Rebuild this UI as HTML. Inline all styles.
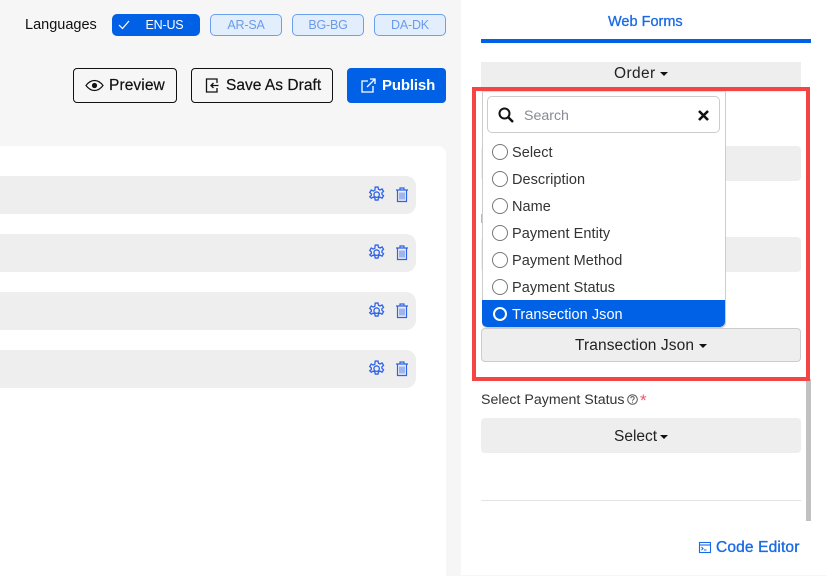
<!DOCTYPE html>
<html><head><meta charset="utf-8"><style>
html,body{margin:0;padding:0}
body{width:827px;height:576px;overflow:hidden;position:relative;background:#f6f6f6;font-family:"Liberation Sans",sans-serif;font-size:14.5px;color:#333}
.a{position:absolute;box-sizing:border-box}
.t{position:absolute;white-space:nowrap;line-height:20px;letter-spacing:.05px}
.pill{position:absolute;top:14px;height:22px;width:72px;border:1px solid #6ba0ee;background:#e3eefc;border-radius:5px;color:#6a9bea;font-size:12.5px;line-height:20px;text-align:center;box-sizing:border-box;letter-spacing:-.2px}
.btn{position:absolute;top:68px;height:35px;border:1px solid #111;border-radius:4px;box-sizing:border-box}
.row{position:absolute;left:0;width:416px;height:38px;background:#eee;border-radius:0 10px 10px 0}
.g{position:absolute;left:481px;width:320px;background:#eee;border-radius:4px}
.caret{position:absolute;width:0;height:0;border-left:4px solid transparent;border-right:4px solid transparent;border-top:4px solid #111}
.rad{position:absolute;left:492px;width:16px;height:16px;border:1.2px solid #777;border-radius:50%;box-sizing:border-box;background:#fff}
svg{position:absolute;overflow:visible}
</style></head><body>

<div class="t" style="left:25px;top:15px;color:#111;letter-spacing:0">Languages</div>
<div class="pill" style="left:112px;width:88px;background:#0061e6;border-color:#0061e6;color:#fff;padding-left:17px">EN-US</div>
<svg style="left:118px;top:20px" width="12" height="10" fill="none" stroke="#fff" stroke-width="1.2"><path d="M1 5l3.5 3.5L11 1"/></svg>
<div class="pill" style="left:210px">AR-SA</div>
<div class="pill" style="left:292px">BG-BG</div>
<div class="pill" style="left:374px">DA-DK</div>

<div class="btn" style="left:73px;width:104px"></div>
<svg style="left:85px;top:79px" width="19" height="13" fill="none" stroke="#111" stroke-width="1.2"><path d="M1 6.500C4 2.500 7 1.500 9.500 1.500S15 2.500 18 6.500C15 10.500 12 11.500 9.500 11.500S4 10.500 1 6.500Z"/><circle cx="9.500" cy="6.500" r="2.600" fill="#111" stroke="none"/></svg>
<div class="t" style="left:109px;top:76px;color:#111;font-size:15.500px;letter-spacing:.1px;-webkit-text-stroke:.2px #111">Preview</div>

<div class="btn" style="left:191px;width:142px"></div>
<svg style="left:205px;top:78px" width="14" height="15" fill="none" stroke="#111" stroke-width="1.300"><path d="M12 5V1H1.500v13H12v-4"/><path d="M13.500 7.500H6M8.500 5L6 7.500 8.500 10"/></svg>
<div class="t" style="left:226px;top:76px;color:#111;font-size:15.500px;letter-spacing:.03px;-webkit-text-stroke:.2px #111">Save As Draft</div>

<div class="a" style="left:347px;top:68px;width:99px;height:35px;background:#0061e6;border-radius:4px"></div>
<svg style="left:361px;top:78px" width="15" height="15" fill="none" stroke="#fff" stroke-width="1.300"><path d="M7 3H1v11h11V8"/><path d="M6 9l8-8M9 1h5v5"/></svg>
<div class="t" style="left:382px;top:76px;color:#fff;font-size:15px;font-weight:700;letter-spacing:-.15px">Publish</div>

<div class="a" style="left:0;top:146px;width:446px;height:430px;background:#fff;border-radius:0 8px 0 0"></div>
<div class="row" style="top:176px"></div>
<div class="row" style="top:234px"></div>
<div class="row" style="top:292px"></div>
<div class="row" style="top:350px"></div>

<svg width="0" height="0" style="left:0;top:0"><defs>
<g id="gear" fill="none" stroke="#2f63e8" stroke-width="1.200" transform="scale(1.080)"><circle cx="8" cy="8" r="2.500"/><path d="M6.700 1h2.600l.4 2 1.500.7 1.800-1 1.400 2.300-1.500 1.300v1.400l1.500 1.300-1.400 2.300-1.800-1-1.500.7-.4 2H6.700l-.4-2-1.500-.7-1.800 1L1.600 10l1.500-1.300V7.300L1.600 6 3 3.700l1.800 1 1.500-.7z"/></g>
<g id="trash" fill="none" stroke="#2f63e8" stroke-width="1.200"><path d="M0 3h12M4 3V1h4v2"/><path d="M1.500 3v11.500h9V3"/><path d="M4 5.500v7M6 5.500v7M8 5.500v7" stroke="#6a8ff0"/></g>
</defs></svg>
<svg style="left:368px;top:186px" width="16" height="16"><use href="#gear"/></svg><svg style="left:396px;top:187px" width="12" height="15"><use href="#trash"/></svg>
<svg style="left:368px;top:244px" width="16" height="16"><use href="#gear"/></svg><svg style="left:396px;top:245px" width="12" height="15"><use href="#trash"/></svg>
<svg style="left:368px;top:302px" width="16" height="16"><use href="#gear"/></svg><svg style="left:396px;top:303px" width="12" height="15"><use href="#trash"/></svg>
<svg style="left:368px;top:360px" width="16" height="16"><use href="#gear"/></svg><svg style="left:396px;top:361px" width="12" height="15"><use href="#trash"/></svg>

<div class="a" style="left:461px;top:0;width:366px;height:575px;background:#fff"></div>
<div class="t" style="left:608px;top:12px;color:#1a6ae6;font-size:14.500px;-webkit-text-stroke:.3px #1a6ae6;letter-spacing:0">Web Forms</div>
<div class="a" style="left:481px;top:39px;width:330px;height:4px;background:#0061e6"></div>

<div class="g" style="top:62px;height:30px;border-radius:0"></div>
<div class="t" style="left:614px;top:64px;color:#222;letter-spacing:.4px;font-size:15.500px">Order</div>
<div class="caret" style="left:660px;top:72px"></div>

<div class="g" style="top:146px;height:35px"></div>
<div class="g" style="top:237px;height:35px"></div>
<div class="a" style="left:481px;top:214px;width:1px;height:9px;background:#bbb"></div>

<div class="a" style="left:806px;top:379px;width:5px;height:142px;background:#c1c1c1"></div>

<div class="a" style="left:472px;top:87px;width:338px;height:294px;border:4px solid #f44444"></div>

<div class="a" style="left:481.500px;top:91px;width:244px;height:237px;background:#fff;border:1px solid #ccc;border-top-color:#ddd;border-radius:0 0 5px 5px"></div>
<div class="a" style="left:487px;top:96px;width:233px;height:37px;background:#fff;border:1px solid #ccc;border-radius:5px"></div>
<svg style="left:498px;top:107px" width="16" height="16" fill="none" stroke="#111"><circle cx="6.500" cy="6.500" r="5" stroke-width="2"/><path d="M10.500 10.500L15 15" stroke-width="2.400"/></svg>
<div class="t" style="left:524px;top:106px;color:#878c93;font-size:14.200px;letter-spacing:0">Search</div>
<svg style="left:698px;top:110px" width="11" height="11" fill="none" stroke="#111" stroke-width="2.600"><path d="M1 1l9 9M10 1l-9 9"/></svg>

<div class="rad" style="top:144px"></div><div class="t" style="left:512px;top:143px">Select</div>
<div class="rad" style="top:171px"></div><div class="t" style="left:512px;top:170px">Description</div>
<div class="rad" style="top:198px"></div><div class="t" style="left:512px;top:197px">Name</div>
<div class="rad" style="top:225px"></div><div class="t" style="left:512px;top:224px">Payment Entity</div>
<div class="rad" style="top:252px"></div><div class="t" style="left:512px;top:251px">Payment Method</div>
<div class="rad" style="top:279px"></div><div class="t" style="left:512px;top:278px">Payment Status</div>
<div class="a" style="left:482px;top:300px;width:243px;height:27px;background:#0061e6;border-radius:0 0 5px 5px"></div>
<div class="a" style="left:493px;top:307px;width:14px;height:14px;border:2.500px solid #fff;border-radius:50%;background:#0061e6"></div>
<div class="t" style="left:512px;top:305px;color:#fff">Transection Json</div>

<div class="a" style="left:481px;top:328px;width:320px;height:34px;background:#eee;border:1px solid #ccc;border-radius:4px"></div>
<div class="t" style="left:575px;top:336px;color:#222;font-size:15.500px;letter-spacing:.1px">Transection Json</div>
<div class="caret" style="left:699px;top:344px"></div>

<div class="t" style="left:481px;top:390px;font-size:14.200px;letter-spacing:0">Select Payment Status</div>
<svg style="left:627px;top:394px" width="11" height="11" fill="none" stroke="#555" stroke-width="1"><circle cx="5.500" cy="5.500" r="4.800"/><path d="M3.800 4.300c0-2.200 3.400-2.200 3.400 0 0 1.200-1.700 1.200-1.700 2.500M5.500 7.800v1"/></svg>
<div class="t" style="left:640px;top:391px;color:#f0566a;letter-spacing:0;font-size:17px">*</div>

<div class="g" style="top:418px;height:35px"></div>
<div class="t" style="left:614px;top:427px;color:#222;font-size:15.500px;letter-spacing:0">Select</div>
<div class="caret" style="left:660px;top:435px"></div>

<div class="a" style="left:481px;top:500px;width:320px;height:1px;background:#e4e4e4"></div>

<svg style="left:699px;top:542px" width="12" height="11" fill="none" stroke="#1a6ae6" stroke-width="1.100"><rect x=".5" y=".5" width="11" height="10"/><path d="M.5 3h11"/><path d="M2.500 5l1.500 1.500L2.500 8M5 8h2.500"/></svg>
<div class="t" style="left:716px;top:538px;color:#1a6ae6;font-size:15.500px;letter-spacing:.15px;-webkit-text-stroke:.35px #1a6ae6">Code Editor</div>

</body></html>
